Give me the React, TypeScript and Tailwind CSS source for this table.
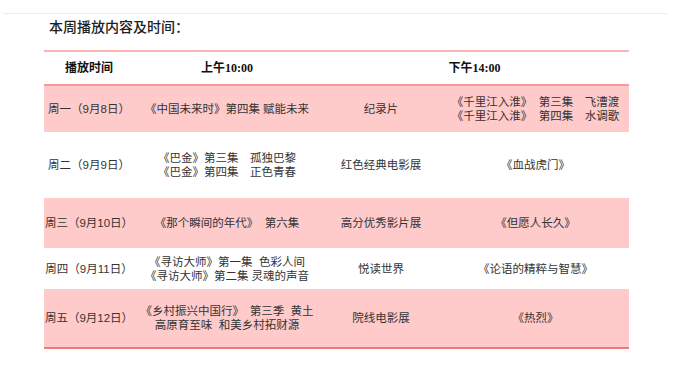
import * as React from "react";

type Row = {
  day: string;
  am: React.ReactNode;
  kind: string;
  pm: React.ReactNode;
  h: string;
  pink: boolean;
};

const rows: Row[] = [
  {
    day: "周一（9月8日）",
    am: "《中国未来时》第四集 赋能未来",
    kind: "纪录片",
    pm: (
      <>
        《千里江入淮》  第三集　飞漕渡
        <br />
        《千里江入淮》  第四集　水调歌
      </>
    ),
    h: "h-[46px]",
    pink: true,
  },
  {
    day: "周二（9月9日）",
    am: (
      <>
        《巴金》第三集　孤独巴黎
        <br />
        《巴金》第四集　正色青春
      </>
    ),
    kind: "红色经典电影展",
    pm: "《血战虎门》",
    h: "h-[66px]",
    pink: false,
  },
  {
    day: "周三（9月10日）",
    am: "《那个瞬间的年代》  第六集",
    kind: "高分优秀影片展",
    pm: "《但愿人长久》",
    h: "h-[50px]",
    pink: true,
  },
  {
    day: "周四（9月11日）",
    am: (
      <>
        《寻访大师》第一集  色彩人间
        <br />
        《寻访大师》第二集 灵魂的声音
      </>
    ),
    kind: "悦读世界",
    pm: "《论语的精粹与智慧》",
    h: "h-[41px]",
    pink: false,
  },
  {
    day: "周五（9月12日）",
    am: (
      <>
        《乡村振兴中国行》　第三季  黄土
        <br />
        高原育至味  和美乡村拓财源
      </>
    ),
    kind: "院线电影展",
    pm: "《热烈》",
    h: "h-[58px]",
    pink: true,
  },
];

export default function App() {
  return (
    <div className="w-[679px] h-[372px] bg-white font-['Liberation_Sans','Noto_Sans_CJK_SC',sans-serif]">
      <div className="pt-[13px] px-[3px]">
        <div className="w-[664px] h-px bg-[#ededed]" />
      </div>

      {/* title */}
      <div className="mt-[4px] pl-[49px] h-[20px] leading-[20px] text-[14px] font-medium text-[#222] font-['Liberation_Serif','Noto_Sans_CJK_SC',serif]">
        本周播放内容及时间：
      </div>

      {/* schedule table */}
      <div className="mt-[12px] ml-[44px] w-[585px] text-[11.5px] text-[#333]">
        <div className="grid grid-cols-[90px_186px_309px] h-[36px] items-center text-center text-[12px] font-bold text-[#111] border-t-2 border-b-2 border-t-[#ffb4b4] border-b-[#f59a9a] font-['Liberation_Serif','Noto_Sans_CJK_SC',serif]">
          <div>播放时间</div>
          <div>上午10:00</div>
          <div>下午14:00</div>
        </div>

        {rows.map((r) => (
          <div
            key={r.day}
            className={`grid grid-cols-[90px_186px_122px_187px] items-center text-center leading-[14px] whitespace-pre ${r.h} ${
              r.pink ? "bg-[#ffcaca]" : "bg-white"
            }`}
          >
            <div>{r.day}</div>
            <div>{r.am}</div>
            <div>{r.kind}</div>
            <div>{r.pm}</div>
          </div>
        ))}
        <div className="h-[2px] bg-[#ec7b7b]" />
      </div>
    </div>
  );
}
